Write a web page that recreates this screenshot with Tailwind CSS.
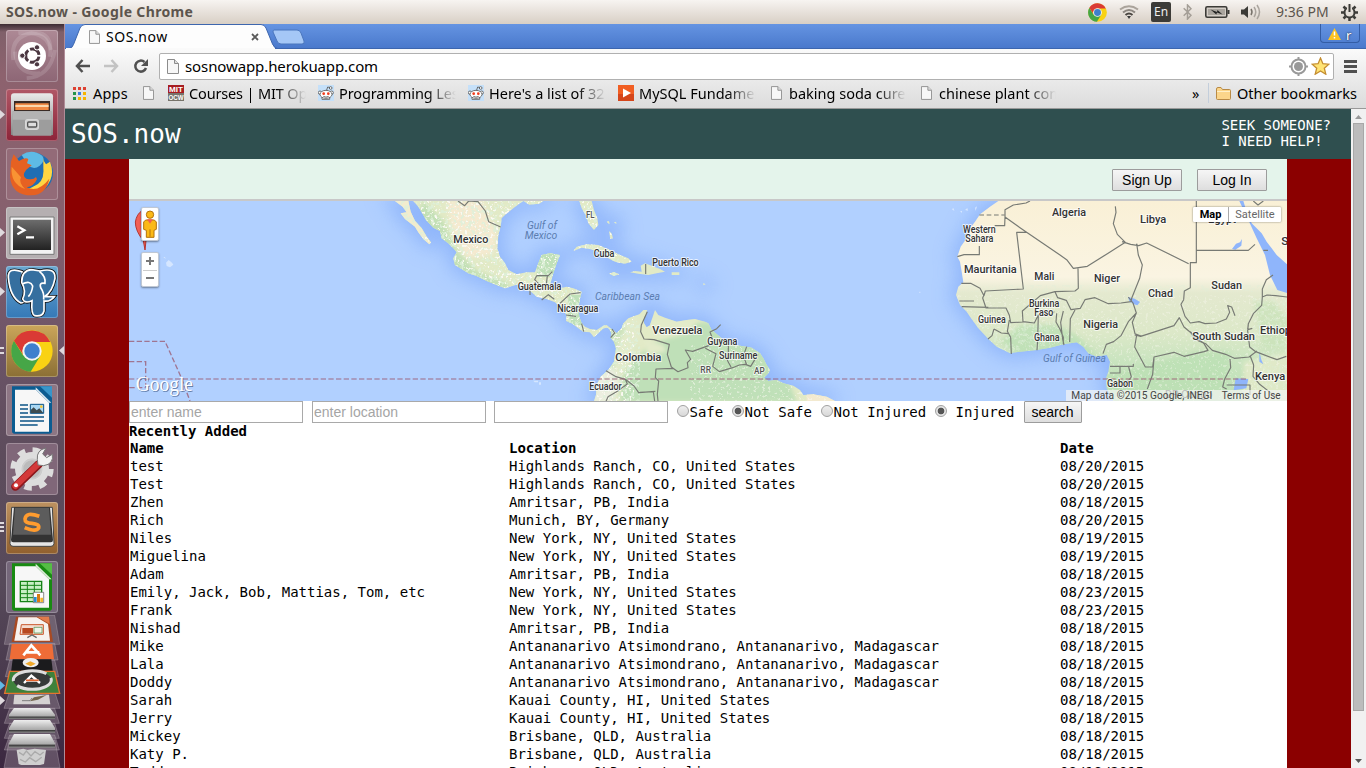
<!DOCTYPE html>
<html lang="en">
<head>
<meta charset="utf-8">
<title>SOS.now</title>
<script src="https://cdn.jsdelivr.net/npm/@tailwindcss/browser@4"></script>
</head>
<body class="w-[1366px] h-[768px] overflow-hidden flex flex-col font-['Noto_Sans',sans-serif] text-black">

<svg width="0" height="0" class="absolute">
  <defs>
    <symbol id="page" viewBox="0 0 12 15"><path d="M.5.5h7l4 4v10H.5z" fill="#f7f7f7" stroke="#8c8c8c"/><path d="M7.5.5v4h4" fill="#ddd" stroke="#8c8c8c"/></symbol>
    <symbol id="alien" viewBox="0 0 48 48"><path fill="#c5e0f9" d="M0 0h48v48H0z"/><g stroke="#555" stroke-width="2.5" fill="#fff"><path d="M25 18l4-12 9 2" fill="none"/><circle cx="38" cy="9" r="4"/><circle cx="6" cy="23" r="5"/><circle cx="41" cy="23" r="5"/><path d="M12 35v8h23v-8"/><ellipse cx="24" cy="28" rx="18" ry="12"/></g><circle cx="17" cy="26" r="4" fill="#f03b1a"/><circle cx="31" cy="26" r="4" fill="#f03b1a"/><path d="M16 34q8 5 16 0" fill="none" stroke="#555" stroke-width="2.5"/></symbol>
    <symbol id="chrome" viewBox="0 0 126 126">
      <circle cx="63" cy="63" r="62" fill="#f9d213"/>
      <path d="M9 32A62 62 0 0 0 59 125L89 76 36 76z" fill="#46a647"/>
      <path d="M9 32A62 62 0 0 1 118 36H63A28 28 0 0 0 37 75z" fill="#da3a35"/>
      <circle cx="63" cy="63" r="29" fill="#f4f4f4"/><circle cx="63" cy="63" r="23" fill="#3f80cd"/>
    </symbol>
    <linearGradient id="metal" x2="0" y2="1"><stop stop-color="#e9e9e9"/><stop offset="1" stop-color="#858585"/></linearGradient>
    <linearGradient id="dark" x2="0" y2="1"><stop stop-color="#6d6d6d"/><stop offset="1" stop-color="#222"/></linearGradient>
    <linearGradient id="slab" x2="0" y2="1"><stop stop-color="#eee"/><stop offset=".75" stop-color="#aaa"/><stop offset=".8" stop-color="#333"/><stop offset="1" stop-color="#888"/></linearGradient>
  </defs>
</svg>

<header class="h-6 shrink-0 flex items-center pl-[6px] pr-2 bg-linear-to-b from-[#f7f4f1] to-[#d8cfc5] text-[#5c554d]">
  <span class="text-[14px] font-bold leading-6 whitespace-nowrap tracking-[0.35px]">SOS.now - Google Chrome</span>
  <div class="ml-auto flex items-center">
    <svg class="w-[19px] h-[19px]"><use href="#chrome"/></svg>
    <svg class="ml-3 w-[20px] h-[14px]" viewBox="0 0 20 14" fill="none" stroke-width="2"><path d="M1 4.500Q10-2 19 4.500" stroke="#aaa39b"/><path d="M4 7.500Q10 2.500 16 7.500" stroke="#8d8780"/><path d="M6.500 10Q10 7 13.500 10" stroke="#4a4641"/><path d="M8 11l2 3 2-3z" fill="#3c3c3c"/></svg>
    <span class="ml-3 w-5 h-5 rounded-[2px] bg-[#3c3b37] text-[#eee] text-[12px] leading-5 text-center">En</span>
    <svg class="ml-3 w-[9px] h-4" viewBox="0 0 9 16" fill="none" stroke="#a49e96" stroke-width="1.500"><path d="M.7 4.300l7.300 7L4.500 15V1L8 4.700l-7.300 7"/></svg>
    <svg class="ml-[13px] w-[25px] h-3" viewBox="0 0 25 12"><rect x=".8" y=".8" width="21" height="10.400" rx="1.500" fill="#d4cec7" stroke="#3c3b37" stroke-width="1.600"/><path d="M3 3h17v6H3z" fill="#aaa59e"/><path d="M23.500 4v4" stroke="#3c3b37" stroke-width="2"/><path d="M5.500 3.500l6.500 2.500.5-2 5 4.500-5.500-2-.7 2z" fill="#222"/></svg>
    <svg class="ml-[11px] w-5 h-[18px]" viewBox="0 0 20 18" fill="none"><path d="M0 6.500h3l4-3.500v12l-4-3.500H0z" fill="#3c3b37"/><path d="M10 6q2 3 0 6" stroke="#77716a" stroke-width="1.500"/><path d="M13 4q3.500 5 0 10M16 2q5 7 0 14" stroke="#aaa49d" stroke-width="1.500"/></svg>
    <span class="ml-[15px] w-[54px] text-[14px] leading-6 whitespace-nowrap text-[#5c554d]">9:36 PM</span>
    <svg class="ml-[11px] w-[17px] h-[17px]" viewBox="0 0 17 17" fill="none" stroke="#3c3b37"><circle cx="8.500" cy="8.500" r="5" stroke-width="2"/><path d="M8.500 1v7" stroke="#e6e0d9" stroke-width="5"/><path d="M8.500 0v8" stroke-width="2"/><path d="M0 8.500h3M14 8.500h3M8.500 14v3M2.500 2.500l2 2M14.500 2.500l-2 2M2.500 14.500l2-2M14.500 14.500l-2-2" stroke-width="2.500"/></svg>
  </div>
</header>

<div class="flex flex-1 min-h-0">
<!-- Launcher -->
<aside class="relative w-[65px] shrink-0 border-r border-[#b08c98] bg-[linear-gradient(180deg,#3d2c33_0,#80606a_8px,#8d626e_50px,#86606e_200px,#6b5467_330px,#5d4c5c_430px,#574a5a_560px,#45354a_680px,#3b2740_744px)] pt-[6px]">
  <div class="flex flex-col gap-[7px] pl-[6px] [&>svg]:w-[52px] [&>svg]:h-[52px] [&>svg]:rounded-[3px] [&>svg]:shadow-[inset_0_0_0_1px_#ffffff40]">
    <svg viewBox="18 30 156 156" class="bg-[linear-gradient(#ad8995,#8d6675)]"><g fill="none" stroke="#fff" stroke-opacity=".14" stroke-width="12"><path d="M40 120Q30 50 95 40T150 110"/><path d="M55 40Q140 30 152 90M45 95Q50 165 120 160M80 175Q150 170 165 90"/></g><circle cx="96" cy="108" r="42" fill="#fff"/><circle cx="97" cy="107" r="20" fill="none" stroke="#4b3741" stroke-width="9" stroke-dasharray="36 5.900" transform="rotate(8 97 107)"/><g fill="#4b3741" stroke="#fff" stroke-width="3"><circle cx="67" cy="107" r="8"/><circle cx="111" cy="82" r="8"/><circle cx="111" cy="133" r="8"/></g></svg>
    <svg viewBox="18 207 156 156" class="bg-[linear-gradient(#b05766,#8d2439)]"><path d="M42 220h108q9 0 9 9v116H33V229q0-9 9-9z" fill="url(#metal)"/><path d="M42 243h108v30H42z" fill="#3a2b25"/><path d="M46 250h100v20H46z" fill="#f08a45"/><path d="M46 258h100" stroke="#fff0d0" stroke-width="4"/><path d="M38 274h116v73H38z" fill="#9d9d9d"/><path d="M38 274h116v25H38z" fill="#b3b3b3"/><rect x="77" y="299" width="38" height="29" rx="6" fill="#ccc" stroke="#d8d8d8" stroke-width="4"/><rect x="83" y="306" width="27" height="15" rx="3" fill="#ddd" stroke="#555" stroke-width="4"/></svg>
    <svg viewBox="18 384 156 156" class="bg-[#936b78]"><circle cx="97" cy="459" r="62" fill="#1f6eb4"/><path d="M65 405q30-20 62 2q10 15-8 30t-35-2z" fill="#5ebbe5"/><path d="M130 405q-2 18 8 28l12-8q18 45-16 80q-44 36-85 0q24 12 50-5q35-12 31-55z" fill="#ffd642"/><path d="M33 425l8-22 16 20q18-12 28-6l-4 13 14 6-16 13q-15 18 0 27 20 6 29-5l3 7q-10 22-31 24 35 17 68-26-10 48-53 50Q35 526 30 470z" fill="#e66122"/><path d="M35 440q-5 50 40 67q-20-20-12-35z" fill="#f99333"/></svg>
    <svg viewBox="18 561 156 156" class="bg-[#b5afb1]"><path d="M30 591h132v112H30z" fill="#f2f2f2" stroke="#777" stroke-width="3"/><path d="M39 599h114v91H39z" fill="url(#dark)"/><path d="M52 619l21 12-21 12M78 652h24" fill="none" stroke="#fff" stroke-width="7"/></svg>
    <svg viewBox="18 18 156 156" class="bg-[linear-gradient(#69a7d0,#3579b7)]"><g fill="#356f9f" stroke="#fff" stroke-width="5"><path d="M66 35Q24 20 25 52q5 60 38 77q12 0 19-18z" stroke="#111" stroke-width="10"/><path d="M66 35Q24 20 25 52q5 60 38 77q12 0 19-18z"/><path d="M120 33q47-12 45 22-8 42-32 55h30q-12 16-31 13v30q-4 18-28 14-11-4-8-45-22 10-28-5 12-24-3-50 0-36 30-38z" stroke="#111" stroke-width="10"/><path d="M120 33q47-12 45 22-8 42-32 55h30q-12 16-31 13v30q-4 18-28 14-11-4-8-45-22 10-28-5 12-24-3-50 0-36 30-38z"/><path d="M118 34q20 15 17 36-20-4-12 15 10 14 8 34M66 72q25-12 32 6-2 20-13 32" fill="none"/></g></svg>
    <svg viewBox="18 195 156 156" class="bg-[linear-gradient(#cba65a,#8b6f35)]"><use href="#chrome" x="33" y="210" width="126" height="126"/></svg>
    <svg viewBox="18 372 156 156" class="bg-[#8d7684]"><path d="M36 379h112q8 0 8 8v126q0 8-8 8H44q-8 0-8-8z" fill="#0b5c91"/><path d="M120 379h36v34z" fill="#3795ca"/><path d="M45 389h62l40 39v87H45z" fill="#f7f7f7"/><path d="M107 389v-7l47 46h-7z" fill="#d8e6ef"/><path d="M60 435h24M60 447h24M60 459h24M60 471h72M60 483h72M60 495h53" stroke="#0d5486" stroke-width="5"/><path d="M91 433h40v27H91z" fill="#aad8f4" stroke="#0d5486" stroke-width="3"/><path d="M92 459v-9l9-8 9 9 8-6 12 14z" fill="#3d4c50"/><circle cx="124" cy="440" r="4" fill="#f5c837"/></svg>
    <svg viewBox="18 549 156 156" class="bg-[#806779]"><circle cx="96" cy="627" r="56" fill="none" stroke="#ddd" stroke-width="18" stroke-dasharray="22 21.980"/><circle cx="96" cy="627" r="42" fill="#e6e6e6" stroke="#ddd" stroke-width="18"/><circle cx="96" cy="627" r="29" fill="#bbb" stroke="#ccc" stroke-width="6"/><path d="M46 680l70-67" stroke="#8c171b" stroke-width="25" stroke-linecap="round"/><path d="M46 678l70-67" stroke="#d33a3a" stroke-width="18" stroke-linecap="round"/><path d="M112 598q-3-28 26-34l-10 18 12 11 17-10q5 29-26 34l-17-2z" fill="#f1f1f1" stroke="#777" stroke-width="3"/><circle cx="48" cy="676" r="6" fill="#fff"/></svg>
    <svg viewBox="18 6 156 156" class="bg-[linear-gradient(#bd9160,#91602e)]"><path d="M35 22h122l5 108q0 9-9 9H39q-9 0-9-9z" fill="#e6e6e6" stroke="#444" stroke-width="3"/><path d="M42 22h108l9 98q0 7-7 7H40q-7 0-7-7z" fill="#333"/><path d="M45 24h102l6 80H39z" fill="#5c5c5c"/><path d="M118 49q-40-15-43 8-1 12 21 13 23 2 20 14-8 13-42-1" fill="none" stroke="#ff9c2f" stroke-width="11"/></svg>
    <svg viewBox="18 183 156 156" class="bg-[#75677a]"><path d="M36 190h112q8 0 8 8v126q0 8-8 8H44q-8 0-8-8z" fill="#188a12"/><path d="M119 190h37v34z" fill="#55bd45"/><path d="M45 199h62l40 39v85H45z" fill="#f7f7f7"/><path d="M107 199v-8l48 47h-8z" fill="#dbe9d8"/><path d="M61 244h64v61H61z" fill="#c9efc5" stroke="#168217" stroke-width="4"/><path d="M61 256h64M61 268h64M61 281h64M61 293h64M82 244v61M103 244v61" stroke="#168217" stroke-width="3"/><path d="M100 277h31v31h-31z" fill="#fff" stroke="#555" stroke-width="2"/><path d="M102 291h8v15h-8z" fill="#278ed0"/><path d="M111 282h9v24h-9z" fill="#d77a12"/><path d="M121 293h8v13h-8z" fill="#f2b82f"/></svg>
  </div>
  <svg class="absolute left-0 top-[591px] w-[66px] h-[153px]" viewBox="0 345 198 459">
    <g fill="#a99aa5" fill-opacity=".35" stroke="#c9bcc6" stroke-opacity=".5" stroke-width="2"><path d="M29 346h135l15 87H13z"/><path d="M29 430h135l10 50H18z"/><path d="M29 480h135l12 50H16z"/><path d="M29 575h135l16 50H12z"/><path d="M29 625h135l14 45H13z"/><path d="M29 670h135l14 45H13z"/><path d="M29 705h135l14 45H13z"/><path d="M28 720h137l15 83H12z"/></g>
    <path d="M48 350h99l12 76H35z" fill="#a84a23"/><path d="M55 352h55l34 20 6 50H43z" fill="#f6f2ef"/><path d="M111 350h36l2 22z" fill="#e07b4c"/><path d="M64 374h66v29H60z" fill="#f4ddd0" stroke="#c9582c" stroke-width="3"/><path d="M67 384h32v17H67z" fill="#b7481f"/><path d="M102 382h24v17h-24z" fill="#eef5e9" stroke="#438b46" stroke-width="2"/><path d="M82 413l14-8 14 8" stroke="#666" stroke-width="4" fill="none"/>
    <path d="M35 432h122l5 46H29z" fill="#ee6c37"/><path d="M70 466l24-30 27 30M78 457h40" stroke="#fff" stroke-width="8" fill="none"/>
    <path d="M38 478h116l5 40H33z" fill="#1b1b1d"/><ellipse cx="92" cy="488" rx="24" ry="14" fill="#eee"/><path d="M76 491l15-7 16 7-15 8z" fill="#f0a92c"/>
    <path d="M29 514h135l15 66H14z" fill="#3e813b" stroke="#e5742e" stroke-width="4"/><ellipse cx="97" cy="540" rx="57" ry="28" fill="#363a39" stroke="#ddd" stroke-width="9" stroke-dasharray="115 18"/><path d="M72 549l22-22 26 22M79 542h37" stroke="#fff" stroke-width="7" fill="none"/><path d="M78 541h38" stroke="#e6632c" stroke-width="5"/>
    <path d="M43 584h104l4 29H40z" fill="#d5d2d2"/><path d="M90 604l12-12 38-7-26 14z" fill="#71644b"/><path d="M66 602h24l6-8" stroke="#555" stroke-width="2" fill="none"/>
    <g fill="url(#slab)"><path d="M42 624h108l15 20v13H27v-13z"/><path d="M42 660h108l15 24v14H27v-14z"/><path d="M42 702h108l15 28v13H27v-13z"/></g>
    <path d="M50 750l20-4 12 4 22-4 34 4-6 42-12 3H64l-8-3z" fill="#cfcfcf"/><path d="M57 757l13 8 9-12 14 15 12-13 15 10 11-9M60 778l16 8 13-13 18 12 18-13" stroke="#aaa" stroke-width="4" fill="none"/>
  </svg>
  <svg class="absolute left-0 top-0 w-[65px] h-[744px]" viewBox="0 24 65 744" fill="#dfdade"><path d="M0 110l5 4.500-5 4.500zM0 228l5 4.500-5 4.500zM0 287l5 4.500-5 4.500zM0 347h4v2H0zM0 352h4v2H0zM64 346l-5 4.500 5 4.500zM0 522h4v2H0zM0 526h4v2H0zM0 530h4v2H0zM0 696l5 4.500-5 4.500z"/><path d="M0 681l5 4.500-5 4.500z" fill="#61b9e8"/></svg>
</aside>

<main class="flex-1 min-w-0 flex flex-col">
  <!-- Tab strip -->
  <div class="relative h-[25px] shrink-0 bg-linear-to-b from-[#6594e2] to-[#4a79cc] border-b border-[#3d66ae]">
    <svg class="absolute left-0 top-0 w-[245px] h-[25px]" viewBox="0 0 245 25"><path d="M0 24.500h4q3 0 4.500-4L15 4q1.500-3.500 5-3.500h176q3.500 0 5 3.500l6.500 16q2 4.500 5 4.500z" fill="#fdfdfd" stroke="#3d66ae"/><path d="M1 25h209" stroke="#fafafa" stroke-width="2"/><path d="M209 6h23q3 0 4 3l3 8q1 3-2 3h-21q-3 0-4-3l-4-9q0-2 1-2z" fill="#a5c7f6" stroke="#4b76bd"/></svg>
    <div class="relative flex items-center h-6 pl-6">
      <svg class="w-[11px] h-[14px] mt-[2px]"><use href="#page"/></svg>
      <span class="ml-[6px] mt-[2px] w-[144px] text-[14px] leading-6 tracking-[0.55px]">SOS.now</span>
      <svg class="ml-px mt-[2px] w-[8px] h-[8px]" viewBox="0 0 8 8" stroke="#5a5a5a" stroke-width="1.800"><path d="M1 1l6 6M7 1L1 7"/></svg>
      <div class="ml-auto mr-[6px] -mt-[5px] w-10 h-[19px] pl-[7px] pt-[4px] flex gap-[5px] border border-t-0 border-[#345da5] rounded-b-[4px]">
        <svg class="w-[13px] h-[12px]" viewBox="0 0 13 12"><path d="M6.500 0L13 12H0z" fill="#fdc322"/><path d="M6.500 3.500v4M6.500 9v1.500" stroke="#fff" stroke-width="1.500"/></svg>
        <span class="text-white text-[13px] leading-[15px] [text-shadow:0_0_2px_#000]">r</span>
      </div>
    </div>
  </div>
  <!-- Toolbar -->
  <div class="h-[60px] shrink-0 bg-linear-to-b from-[#fafafa] to-[#dcdcdc] border-b border-[#999] flex flex-col">
    <div class="flex items-center h-[34px] pl-[10px] pr-[9px]">
      <svg class="w-[15px] h-[14px]" viewBox="0 0 15 14" fill="none" stroke="#505050" stroke-width="2.500"><path d="M7.500 1L2 7l5.500 6M2 7h13"/></svg>
      <svg class="ml-[14px] w-[15px] h-[14px]" viewBox="0 0 15 14" fill="none" stroke="#c3c3c3" stroke-width="2.500"><path d="M7.500 1L13 7l-5.500 6M0 7h13"/></svg>
      <svg class="ml-[14px] w-[16px] h-[15px]" viewBox="0 0 16 15"><path d="M11.500 3A5.500 5.500 0 1 0 13 9" fill="none" stroke="#505050" stroke-width="2.500"/><path d="M15 0v7H8z" fill="#505050"/></svg>
      <div class="ml-[10px] w-[1175px] h-[27px] bg-white border border-[#b0b0b0] rounded-[2px] flex items-center pl-[7px] pr-[3px]">
        <svg class="w-3 h-[15px]"><use href="#page"/></svg>
        <span class="ml-[6px] text-[15px] leading-6 tracking-[-0.1px]">sosnowapp.herokuapp.com</span>
        <svg class="ml-auto w-[19px] h-[19px]" viewBox="0 0 19 19" fill="none" stroke="#999" stroke-width="2"><circle cx="9.500" cy="9.500" r="7"/><circle cx="9.500" cy="9.500" r="4.500" fill="#999" stroke="none"/><path d="M9.500 0v3M9.500 16v3M0 9.500h3M16 9.500h3"/></svg>
        <svg class="ml-[3px] w-[19px] h-[18px]" viewBox="0 0 19 18"><path d="M9.500 1l2.400 5.700 6 .5-4.600 4 1.500 6-5.300-3.300-5.300 3.300 1.500-6-4.600-4 6-.5z" fill="#ffe373" stroke="#c48d31" stroke-width="1.300"/></svg>
      </div>
      <svg class="ml-auto w-[13px] h-[13px]" viewBox="0 0 13 13" stroke="#505050" stroke-width="2.800"><path d="M0 1.500h13M0 6.500h13M0 11.500h13"/></svg>
    </div>
    <div class="flex items-center h-[22px] -mt-px pl-2 text-[14.500px] leading-[22px] whitespace-nowrap [&>svg]:shrink-0">
      <svg class="w-[13px] h-[13px]" viewBox="0 0 13 13"><g fill="#dd4132"><path d="M0 0h3v3H0zM5 0h3v3H5zM10 0h3v3h-3z"/></g><path d="M0 5h3v3H0zM0 10h3v3H0z" fill="#24944b"/><path d="M5 5h3v3H5z" fill="#3d7de0"/><path d="M10 5h3v3h-3zM5 10h3v3H5zM10 10h3v3h-3z" fill="#f6b400"/></svg>
      <span class="ml-[7px] w-[50px] tracking-[0.2px]">Apps</span>
      <svg class="w-[11px] h-[14px]"><use href="#page"/></svg>
      <svg class="ml-[14px] w-4 h-4" viewBox="0 0 16 16"><path d="M0 0h16v8H0z" fill="#a71d22"/><path d="M0 8h16v8H0z" fill="#77736a"/><g font-family="Liberation Sans" font-weight="bold" fill="#fff"><text x="1" y="7" font-size="8" textLength="14" lengthAdjust="spacingAndGlyphs">MIT</text><text x=".5" y="15" font-size="8" textLength="15" lengthAdjust="spacingAndGlyphs">OCW</text></g></svg>
      <span class="ml-[5px] w-[117px] shrink-0 overflow-hidden tracking-[-0.15px] [mask-image:linear-gradient(90deg,#000_75%,transparent)]">Courses | MIT OpenCourse</span>
      <svg class="ml-3 w-4 h-4"><use href="#alien"/></svg>
      <span class="ml-[5px] w-[117px] shrink-0 overflow-hidden tracking-[-0.1px] [mask-image:linear-gradient(90deg,#000_75%,transparent)]">Programming Lessons</span>
      <svg class="ml-3 w-4 h-4"><use href="#alien"/></svg>
      <span class="ml-[5px] w-[117px] shrink-0 overflow-hidden [mask-image:linear-gradient(90deg,#000_75%,transparent)]">Here's a list of 32</span>
      <svg class="ml-3 w-4 h-4" viewBox="0 0 16 16"><path d="M0 0h16v9H0z" fill="#f15e22"/><path d="M0 9h16v7H0z" fill="#d5461b"/><path d="M5 3.500l8 4.500-8 4.500z" fill="#fff"/></svg>
      <span class="ml-[5px] w-[117px] shrink-0 overflow-hidden [mask-image:linear-gradient(90deg,#000_75%,transparent)]">MySQL Fundamentals</span>
      <svg class="ml-[15px] w-[11px] h-[14px]"><use href="#page"/></svg>
      <span class="ml-[7px] w-[117px] shrink-0 overflow-hidden [mask-image:linear-gradient(90deg,#000_75%,transparent)]">baking soda cures</span>
      <svg class="ml-[15px] w-[11px] h-[14px]"><use href="#page"/></svg>
      <span class="ml-[7px] w-[117px] shrink-0 overflow-hidden [mask-image:linear-gradient(90deg,#000_75%,transparent)]">chinese plant compound</span>
      <span class="ml-auto mr-[8px] w-2">»</span>
      <span class="w-px h-5 bg-[#c3cedb] mr-[7px]"></span>
      <svg class="w-[15px] h-[13px]" viewBox="0 0 15 13"><path d="M.5 2q0-1.500 1.500-1.500h3l1.500 2h7q1 0 1 1v8q0 1-1 1H1.500q-1 0-1-1z" fill="#fbd58a" stroke="#b98a45"/><path d="M1 4.500h13" stroke="#fff0c8"/></svg>
      <span class="ml-[6px] w-[129px]">Other bookmarks</span>
    </div>
  </div>

  <!-- Page -->
  <div class="flex flex-1 min-h-0">
    <div class="w-[1286px] shrink-0 flex flex-col bg-[#8b0000] font-['DejaVu_Sans_Mono',monospace] text-[14px] overflow-hidden">
      <div class="h-[50px] shrink-0 bg-[#2f4f4f] text-white flex items-center justify-between pl-[6px] pr-5">
        <h1 class="text-[26px] leading-[50px]">SOS.now</h1>
        <p class="leading-4 -mt-[2px]">SEEK SOMEONE?<br>I NEED HELP!</p>
      </div>
      <div class="mx-16 flex-1 bg-white">
        <div class="h-[42px] bg-[#e4f4eb] border-b-2 border-[#c8c8c8] flex justify-end items-center gap-[15px] pr-5 font-['Liberation_Sans',sans-serif] text-[14px]">
          <button class="w-[70px] h-[22px] mt-[2px] border border-[#9c9c9c] rounded-[1px] bg-linear-to-b from-[#f6f6f6] to-[#dedede] leading-5">Sign Up</button>
          <button class="w-[70px] h-[22px] mt-[2px] border border-[#9c9c9c] rounded-[1px] bg-linear-to-b from-[#f6f6f6] to-[#dedede] leading-5">Log In</button>
        </div>
        <!-- Map -->
        <div class="relative h-[200px]">
          <svg class="block w-[1158px] h-[200px]" viewBox="-783 18 3474 600" preserveAspectRatio="none">
            <defs>
              <linearGradient id="af" gradientUnits="userSpaceOnUse" x1="0" y1="18" x2="0" y2="618"><stop stop-color="#f9f0d6"/><stop offset=".38" stop-color="#faf4e2"/><stop offset=".46" stop-color="#e4e9cf"/><stop offset=".66" stop-color="#dce8c8"/><stop offset=".8" stop-color="#c9e4bf"/><stop offset="1" stop-color="#bce0b6"/></linearGradient>
              <filter id="soft" x="-20%" y="-20%" width="140%" height="140%"><feGaussianBlur stdDeviation="28"/></filter>
              <filter id="b6"><feGaussianBlur stdDeviation="6"/></filter>
              <filter id="mott" x="0" y="0" width="100%" height="100%"><feTurbulence type="fractalNoise" baseFrequency=".09" numOctaves="3" seed="4"/><feColorMatrix values="0 0 0 0 .73  0 0 0 0 .87  0 0 0 0 .70  9 0 0 0 -4.700"/></filter>
              <filter id="mott2" x="0" y="0" width="100%" height="100%"><feTurbulence type="fractalNoise" baseFrequency=".12" numOctaves="3" seed="12"/><feColorMatrix values="0 0 0 0 .96  0 0 0 0 .95  0 0 0 0 .88  0 10 0 0 -6"/></filter>
              <path id="west" d="M15 18H55L62 50 75 78 95 100 110 125 123 142 118 148 100 132 85 112 75 95 45 72 32 55 50 52 38 35zM70 18L85 35 100 60 108 75 130 98 150 108 155 130 175 145 190 160 200 172 190 190 195 210 215 222 235 235 260 243 290 258 320 270 345 280 370 272 385 268 400 280 425 292 440 305 470 312 495 322 505 330 520 345 530 362 528 378 545 385 565 400 580 410 600 412 612 427 625 415 640 400 655 398 665 415 662 428 672 440 678 460 672 500 655 525 632 545 620 570 618 600 612 618H1335L1310 605 1270 598 1240 600 1230 585 1210 572 1180 565 1160 555 1135 558 1122 548 1135 535 1140 525 1130 510 1120 490 1110 475 1085 458 1050 452 1015 448 995 430 965 405 955 385 945 380 915 372 890 375 860 380 825 368 805 360 795 345 790 360 780 390 770 395 762 380 772 345 760 345 748 358 715 370 700 385 695 400 680 415 668 405 650 390 640 392 620 405 600 402 585 395 575 385 568 365 565 340 570 310 575 290 550 280 530 275 500 282 485 280 480 270 490 235 500 205 510 180 480 175 455 180 445 205 435 232 410 232 380 238 355 225 345 205 330 185 322 160 325 120 332 95 335 70 345 60 370 40 390 25 400 18zM568 18L575 40 590 65 595 85 612 105 625 90 622 70 612 45 605 18zM550 168L560 155 590 148 625 150 660 165 690 180 715 190 725 200 705 206 675 200 655 190 648 178 600 162 575 158zM720 232L735 228 755 230 752 212 765 205 785 212 810 222 825 230 800 235 775 240 745 236zM845 232h23v8h-23zM657 236l15-5 16 7-16 5zM400 18h60l-12 8-30 3zM650 80l7-2 2 10-6-4zM657 108l8 8 4 14-8 2zM672 83l6-3 2 6zM940 264l7 4-7 3z"/>
              <path id="east" d="M1825 18L1800 35 1770 58 1755 80 1740 100 1730 130 1712 155 1702 185 1710 200 1715 230 1720 262 1705 275 1698 300 1710 330 1730 350 1740 365 1765 400 1795 432 1820 455 1860 475 1890 470 1940 465 1980 458 2020 448 2060 442 2080 455 2095 475 2120 485 2150 480 2160 500 2155 530 2148 550 2150 580 2162 600 2170 618H2691V18z"/>
              <clipPath id="cw"><use href="#west"/></clipPath><clipPath id="ce"><use href="#east"/></clipPath>
            </defs>
            <path d="M-783 18h3474v600H-783z" fill="#b1d0ff"/>
            <g fill="#86aef9" stroke="#86aef9" stroke-width="34" opacity=".75" filter="url(#soft)"><use href="#west"/><use href="#east"/></g>
            <use href="#west" fill="#e2eac6"/>
            <g clip-path="url(#cw)">
              <path d="M170 18h110l40 100-10 60-80 10-40-70z" fill="#f5ead0" filter="url(#b6)"/>
              <path d="M100 18l60 60 40 90 60 60 100 40-20 20-170-60-20-60-80-80z" fill="#c3e0b6" filter="url(#b6)"/>
              <path d="M0 0h65l60 150H0z" fill="#f2ecce"/>
              <path d="M440 170h90v75h-90zM535 300h60v90h-60z" fill="#bfe0b8"/>
              <path d="M700 520l70-60 60-40 60-30 60-10 170 80 60 60 40 100H690z" fill="#bfe0b8" filter="url(#b6)"/>
              <path d="M690 380l50 70-40 90-60 80-60-40 80-180z" fill="#cbe3bc" filter="url(#b6)"/>
              <path d="M735 350l20 60-30 90-40 60-20-20 20-100zM760 430l60 20 10 20-60 10zM770 375l150 0-20 40-90 20z" fill="#e3ebca" filter="url(#b6)"/>
              <path d="M625 520l45 0 20 40-20 60h-60z" fill="#eceee0" filter="url(#b6)"/>
              <path d="M1250 595l90 10v30h-90z" fill="#f3ead0"/>
              <path d="M0 18h700v400H0z" filter="url(#mott)" opacity=".8"/>
              <path d="M640 380h110v240H640z" filter="url(#mott)" opacity=".8"/>
              <path d="M90 18h640v600H90z" filter="url(#mott2)"/>
              <path d="M900 450h420v170H900z" filter="url(#mott2)" opacity=".5"/>
            </g>
            <use href="#east" fill="url(#af)"/>
            <g clip-path="url(#ce)">
              <path d="M1830 440l60-50 110 0 60 30 60 60-200 20zM2310 500l110-30 100 0-20 120-40 30h-310v-80z" fill="#bce0b4" filter="url(#b6)" opacity=".8"/>
              <path d="M2590 320l60 0 50 60-20 80-60 0z" fill="#c8e2b8" filter="url(#b6)" opacity=".7"/>
              <path d="M2560 500l140-30v150h-140z" fill="#e6ebcb" filter="url(#b6)" opacity=".8"/>
              <path d="M1700 270h1000v20H1700z" filter="url(#mott)" opacity=".25"/>
              <path d="M1700 360h300v120h-300zM2590 300h110v318h-110z" filter="url(#mott2)" opacity=".35"/>
              <path d="M1700 380h300v110h-300z" filter="url(#mott)" opacity=".45"/>
              <path d="M2590 310h110v308h-110z" filter="url(#mott)" opacity=".35"/>
            </g>
            <g fill="#8fb5fb"><path d="M2548 18L2575 75 2600 130 2625 180 2640 240 2662 285 2691 294V208L2660 180 2630 140 2615 115 2585 85 2570 50 2560 18z"/><path d="M2214 306l20 5 16 10-8 10-12-4-12-8zM2537 550l38 2-6 28-38 6zM2526 162l12-16 12-4 6-10-2 20-18 12zM2608 470l6 24 6 14-12-8zM762 365l10 0 8 25-10 6-8-12z"/></g>
            <g fill="#d5e6ff"><path d="M-680 186l5 0 2 6zM-672 203l8-8 10 8 4 6-10 8-10-4zM1685 42l6-2 2 8zM1710 48l6 0 0 6zM1725 45l7-6 2 8zM1755 38l6-4-4 14zM430 557h14v5h-10zM447 562h6v7h-6zM1588 290h3v4h-3z"/></g>
            <g fill="none" stroke="#777a74" stroke-width="3.500" stroke-linejoin="round">
              <path d="M204 18l20 14 12-14 28 2 22 28 10 32 36 16M440 242h35l12-12M440 242l-6 12 14 14M472 242l-4 36M455 315l20-16 18 14M420 300v-14M510 325l30-28 32-4M528 360l30 4M575 386l6 24M662 428l12-14-8-12"/>
              <path d="M772 350l-18 40-2 20 10 22 30 2 46 14-6 30 12 38 20 14 30-12-2-15 10-10-16-28 22 4 50-18 14-8-12-32 20-10 12-12M946 460l32 16-10 38 20 16 40-12 20-8 18-2 16 6 22-36M1015 450v20l-4 24 12 22M1070 455l-10 28 10 26M850 520l-52 2-2 26 10 10-4 40 2 20M750 592l40-2 4 28M648 527l30 18 28 8 6 14-30 22-28 16-6 14M706 553l26 20 14 20 50-4M767 207v30"/>
              <path d="M1920 18l-12 6-38 6-25 14v22l-1 26h-30M1845 66l45 32 120 82 20 14 20 26 42-6 60-38 54-34-24-24-12-32 8-34-2-18M2196 140l26 8 24 4 24-8 126 62M1702 185l20-6h46v-26M1910 112h-30l20 170-114 6-4 14-12-22-28-15-28 0M2064 220l1 60-10 8-60 2 8 18 26 8 14 28 28-4 14-26 30-6 40 18 38-2 30-4 2-10 24-60 8-40-12-30-5-34M2215 306l14 18 10 30-12 28 8 34 20 8M1995 290l-44 12-54 46 2 32 34 4 12-24 38-2 10-8M1784 295l-6 14 10 30 60 0 10 22 4 22 38-2M1708 318h44M1715 335l80 2M1858 375l-6 34 10 18 2 50M1812 402l22 12 22 2M1812 402l-6 20-12 10M1945 360l-2 72-2 34M2000 355l-2 26 12 22 10 24v20M2020 348l-8 34 6 50 4 18M2055 345l-14 26-2 70M2239 354l-24 26-22 42-22 18-22 8-10 28M2240 420l-6 36 32 60h22l4-30 60-14 30 12 60-14 12-4-12-20-60-50-14-28-16 24-100 32-18-4M2160 514h70v-8M2160 534h30v-20M2216 516l8 30-20 24M2292 490l-4 48-16 44"/>
              <path d="M2419 18v185h-18v75l-18 10-2 26-8 14 12 36 16 20 26-4 18 6 34-2 30-12 10-20-6-20 12 4 10 26M2573 404l2-18 15-30 25-25 2-25M2419 166h156l20-18M2575 388l-2 20 6 48 18 14 64 24 28-10M2573 404l14-4M2401 410l16 24 30 12 20 20 40 12 26 12 44-4 24-18M2520 492l2 26-18 34-6 24 12 6M2581 484l10 26-2 34 20 24 44 34M2510 570h70v30M2617 306l14-6 26 2 34 4M2617 306v-24l12-28 20-14M2590 18l14 12 16-12"/>
              <path d="M1768 60h76M2620 166h20" stroke-dasharray="14 8"/>
            </g>
            <g fill="none" stroke="#9b5e76" stroke-opacity=".6" stroke-width="5" stroke-dasharray="16 7"><path d="M-783 552H2570"/><path d="M-783 439h108l45 100 30 79M-783 500h50v78h-50" stroke-width="4" stroke-opacity=".8"/></g>
            <g font-family="Roboto" font-weight="500" font-size="35" fill="#333" stroke="#fff" stroke-opacity=".75" stroke-width="6" paint-order="stroke" stroke-linejoin="round">
              <text x="190" y="144" textLength="105" lengthAdjust="spacingAndGlyphs">Mexico</text><text x="676" y="498" textLength="138" lengthAdjust="spacingAndGlyphs">Colombia</text><text x="787" y="417" textLength="150" lengthAdjust="spacingAndGlyphs">Venezuela</text>
              <text x="1986" y="63" textLength="102" lengthAdjust="spacingAndGlyphs">Algeria</text><text x="2250" y="84" textLength="79" lengthAdjust="spacingAndGlyphs">Libya</text><text x="1722" y="233" textLength="158" lengthAdjust="spacingAndGlyphs">Mauritania</text><text x="1933" y="254" textLength="60" lengthAdjust="spacingAndGlyphs">Mali</text><text x="2112" y="261" textLength="78" lengthAdjust="spacingAndGlyphs">Niger</text><text x="2274" y="306" textLength="75" lengthAdjust="spacingAndGlyphs">Chad</text><text x="2464" y="282" textLength="92" lengthAdjust="spacingAndGlyphs">Sudan</text><text x="2080" y="399" textLength="104" lengthAdjust="spacingAndGlyphs">Nigeria</text><text x="2407" y="435" textLength="188" lengthAdjust="spacingAndGlyphs">South Sudan</text><text x="2610" y="417" textLength="119" lengthAdjust="spacingAndGlyphs">Ethiopia</text><text x="2595" y="555" textLength="91" lengthAdjust="spacingAndGlyphs">Kenya</text><text x="2674" y="149">Saudi</text><text x="2454" y="83" textLength="84" lengthAdjust="spacingAndGlyphs">Egypt</text>
              <g font-size="30"><text x="611" y="185" textLength="62" lengthAdjust="spacingAndGlyphs">Cuba</text><text x="383" y="286" textLength="131" lengthAdjust="spacingAndGlyphs">Guatemala</text><text x="502" y="350" textLength="123" lengthAdjust="spacingAndGlyphs">Nicaragua</text><text x="598" y="586" textLength="97" lengthAdjust="spacingAndGlyphs">Ecuador</text><text x="787" y="214" textLength="139" lengthAdjust="spacingAndGlyphs">Puerto Rico</text><text x="952" y="451" textLength="90" lengthAdjust="spacingAndGlyphs">Guyana</text><text x="987" y="493" textLength="115" lengthAdjust="spacingAndGlyphs">Suriname</text><text x="1719" y="115" textLength="98" lengthAdjust="spacingAndGlyphs">Western</text><text x="1726" y="141" textLength="84" lengthAdjust="spacingAndGlyphs">Sahara</text><text x="1764" y="383" textLength="83" lengthAdjust="spacingAndGlyphs">Guinea</text><text x="1917" y="337" textLength="91" lengthAdjust="spacingAndGlyphs">Burkina</text><text x="1933" y="364" textLength="57" lengthAdjust="spacingAndGlyphs">Faso</text><text x="1932" y="437" textLength="77" lengthAdjust="spacingAndGlyphs">Ghana</text><text x="2151" y="575" textLength="78" lengthAdjust="spacingAndGlyphs">Gabon</text></g>
              <g font-size="27" fill="#555"><text x="588" y="69" textLength="26" lengthAdjust="spacingAndGlyphs">FL</text><text x="931" y="534" textLength="32" lengthAdjust="spacingAndGlyphs">RR</text><text x="1092" y="537" textLength="32" lengthAdjust="spacingAndGlyphs">AP</text></g>
            </g>
            <g font-family="Roboto" font-style="italic" font-size="33" fill="#5b7db0"><text x="411" y="101" textLength="90" lengthAdjust="spacingAndGlyphs">Gulf of</text><text x="404" y="131" textLength="98" lengthAdjust="spacingAndGlyphs">Mexico</text><text x="615" y="314" textLength="195" lengthAdjust="spacingAndGlyphs">Caribbean Sea</text><text x="1959" y="501" textLength="189" lengthAdjust="spacingAndGlyphs">Gulf of Guinea</text></g>
            <path d="M2028 585h663v33h-663z" fill="#f5f5f5" fill-opacity=".7"/>
            <text x="2325" y="610" font-family="Roboto" font-size="30" fill="#bbb" textLength="142" lengthAdjust="spacingAndGlyphs">DR Congo</text>
            <g font-family="Roboto" font-size="33" fill="#444"><text x="2044" y="612" textLength="423" lengthAdjust="spacingAndGlyphs">Map data ©2015 Google, INEGI</text><text x="2495" y="612" textLength="177" lengthAdjust="spacingAndGlyphs">Terms of Use</text></g>
            <path d="M-735 165l-5-28q-24-29-24-56 4-24 20-34 24 15 26 42-2 28-14 48z" fill="#f25f55" stroke="#b53630" stroke-width="3"/>
            <g font-family="Liberation Serif" font-size="64"><text x="-760" y="591" fill="#44618c" opacity=".7" textLength="172" lengthAdjust="spacingAndGlyphs">Google</text><text x="-763" y="588" fill="#fff" textLength="172" lengthAdjust="spacingAndGlyphs">Google</text></g>
          </svg>
          <div class="absolute left-3 top-[6px] w-[18px] h-[34px] bg-white rounded-[2px] border border-[#c0c8d4] shadow-[0_1px_2px_#0006] flex justify-center items-center">
            <svg class="w-[14px] h-[28px] shrink-0" viewBox="0 0 42 84"><path d="M8 30h26l6 6v22l-7 3v21H10V61l-8-3V36z" fill="#fbb916" stroke="#b4730a" stroke-width="3"/><circle cx="21" cy="14" r="11" fill="#fbb916" stroke="#b4730a" stroke-width="3"/><path d="M12 28h18l-9 13z" fill="#f0604d"/><path d="M21 58v22" stroke="#b4730a" stroke-width="3"/></svg>
          </div>
          <div class="absolute left-3 top-[51px] w-[18px] h-[35px] bg-white rounded-[2px] border border-[#c0c8d4] shadow-[0_1px_2px_#0006]">
            <svg class="w-4 h-[33px]" viewBox="0 0 16 33" stroke="#777" stroke-width="2"><path d="M4 8h8M8 4v8M4 25h8"/><path d="M1 17.500h14" stroke="#ccc" stroke-width="1"/></svg>
          </div>
          <div class="absolute right-[6px] top-[6px] h-[15px] flex bg-white rounded-[1px] shadow-[0_0_2px_#0008] font-['Roboto',sans-serif] text-[11px] leading-[15px]">
            <span class="w-[36px] text-center font-bold border-r border-[#aaa]">Map</span><span class="w-[52px] text-center text-[#666]">Satellite</span>
          </div>
        </div>
        <!-- Search form -->
        <div class="flex items-center h-[22px] leading-[22px] font-['Liberation_Sans',sans-serif] text-[#a5a5a5]">
          <div class="w-[174px] h-[22px] border border-[#a9a9a9] pl-[1px] leading-[20px]">enter name</div>
          <div class="ml-[9px] w-[174px] h-[22px] border border-[#a9a9a9] pl-[1px] leading-[20px]">enter location</div>
          <div class="ml-2 w-[174px] h-[22px] border border-[#a9a9a9]"></div>
          <div class="ml-[9px] flex items-center font-['DejaVu_Sans_Mono',monospace] text-black whitespace-pre">
            <i class="w-3 h-3 -mt-[3px] rounded-full border border-[#a0a0a0] bg-linear-to-b from-[#eee] to-[#d8d8d8]"></i><span class="ml-[0.500px] w-[42.500px]">Safe</span>
            <i class="w-3 h-3 -mt-[3px] rounded-full border border-[#a0a0a0] bg-[radial-gradient(circle,#555_0_3px,#e4e4e4_3.700px)]"></i><span class="ml-[0.500px] w-[76.500px]">Not Safe</span>
            <i class="w-3 h-3 -mt-[3px] rounded-full border border-[#a0a0a0] bg-linear-to-b from-[#eee] to-[#d8d8d8]"></i><span class="ml-[0.500px] w-[101px]">Not Injured</span>
            <i class="w-3 h-3 -mt-[3px] rounded-full border border-[#a0a0a0] bg-[radial-gradient(circle,#555_0_3px,#e4e4e4_3.700px)]"></i><span class="ml-[9px] w-[68px]">Injured</span>
          </div>
          <button class="w-[58px] h-[22px] border border-[#9c9c9c] rounded-[1px] bg-linear-to-b from-[#f6f6f6] to-[#dedede] leading-5 text-black">search</button>
        </div>
        <div class="h-4 leading-4 font-bold">Recently Added</div>
        <div id="rows" class="pl-px"></div>
      </div>
    </div>
    <div class="w-[15px] bg-[#f1f1f1] flex flex-col items-center">
      <svg class="w-[15px] h-[14px]" viewBox="0 0 15 14"><path d="M4 10l3.500-4L11 10z" fill="#999"/></svg>
      <div class="w-[11px] h-[588px] bg-[#bcbcbc] border border-[#a8a8a8]"></div>
      <svg class="mt-auto w-[15px] h-[14px]" viewBox="0 0 15 14"><path d="M4 5l3.500 4L11 5z" fill="#555"/></svg>
    </div>
  </div>
</main>
</div>
<script>
const US = "New York, NY, United States", IN = "Amritsar, PB, India", MG = "Antananarivo Atsimondrano, Antananarivo, Madagascar",
  CO = "Highlands Ranch, CO, United States", HI = "Kauai County, HI, United States", AU = "Brisbane, QLD, Australia";
const rows = [["Name","Location","Date"],["test",CO,20],["Test",CO,20],["Zhen",IN,18],["Rich","Munich, BY, Germany",20],["Niles",US,19],["Miguelina",US,19],["Adam",IN,18],["Emily, Jack, Bob, Mattias, Tom, etc",US,23],["Frank",US,23],["Nishad",IN,18],["Mike",MG,18],["Lala",MG,18],["Doddy",MG,18],["Sarah",HI,18],["Jerry",HI,18],["Mickey",AU,18],["Katy P.",AU,18],["Teddy",AU,18]];
document.getElementById("rows").innerHTML = rows.map((r, i) =>
  `<div class="grid grid-cols-[379px_551px_1fr] h-[18px] leading-[18px] whitespace-nowrap ${i ? "" : "font-bold"}"><span>${r[0]}</span><span>${r[1]}</span><span>${i ? "08/" + r[2] + "/2015" : r[2]}</span></div>`).join("");
</script>
</body>
</html>
